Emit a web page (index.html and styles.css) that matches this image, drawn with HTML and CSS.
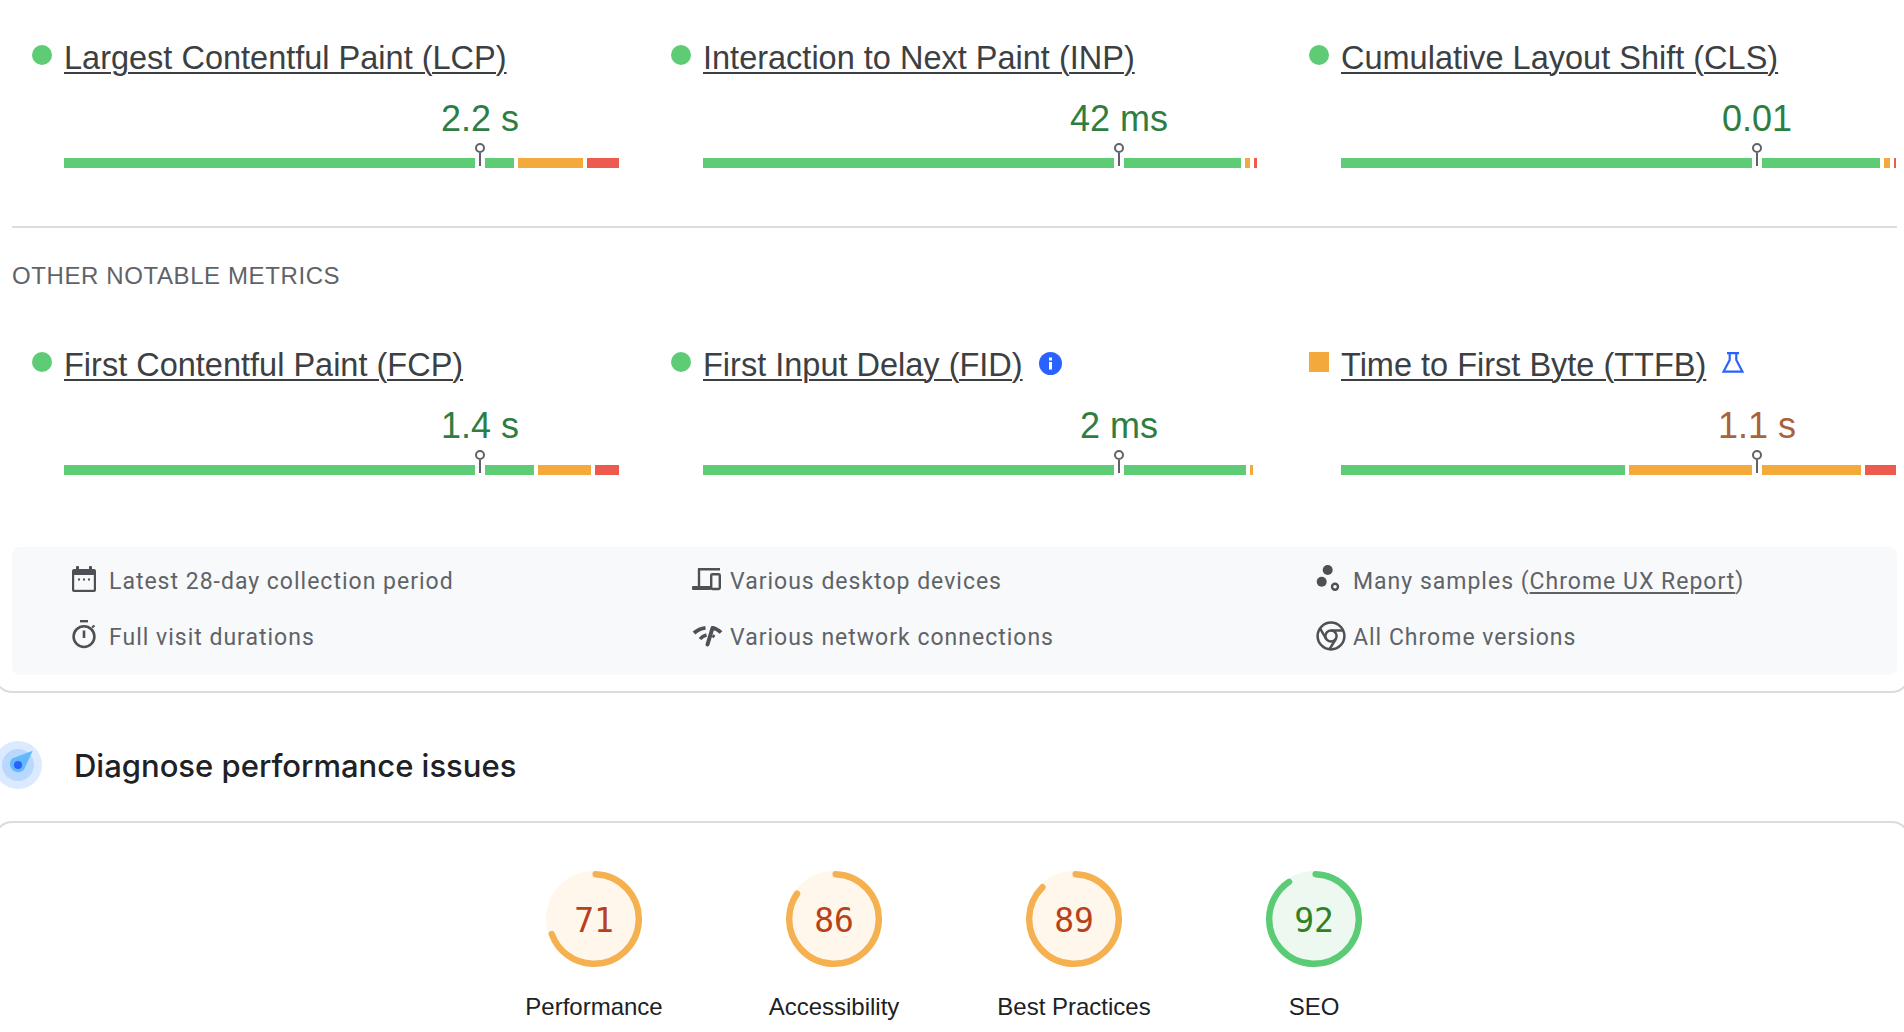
FILE: index.html
```html
<!DOCTYPE html>
<html lang="en">
<head>
  <meta charset="UTF-8">
  <title>PageSpeed Insights</title>
  <link rel="stylesheet" href="styles.css">
</head>
<body>
  <section class="card card-top">
    <div class="metrics">
      <div class="metric">
        <div class="metric-head"><span class="rating dot"></span><a class="metric-title" href="#">Largest Contentful Paint (LCP)</a></div>
        <div class="value good">2.2 s</div>
        <div class="bar">
          <span class="seg green" style="width:450px"></span><span class="seg orange" style="width:65px"></span><span class="seg red" style="width:32px"></span>
          <span class="marker"></span>
        </div>
      </div>
      <div class="metric">
        <div class="metric-head"><span class="rating dot"></span><a class="metric-title" href="#">Interaction to Next Paint (INP)</a></div>
        <div class="value good">42 ms</div>
        <div class="bar">
          <span class="seg green" style="width:538px"></span><span class="seg orange" style="width:5px"></span><span class="seg red" style="width:3px"></span>
          <span class="marker"></span>
        </div>
      </div>
      <div class="metric">
        <div class="metric-head"><span class="rating dot"></span><a class="metric-title" href="#">Cumulative Layout Shift (CLS)</a></div>
        <div class="value good">0.01</div>
        <div class="bar">
          <span class="seg green" style="width:539px"></span><span class="seg orange" style="width:6px"></span><span class="seg red" style="width:2px"></span>
          <span class="marker"></span>
        </div>
      </div>
    </div>

    <hr class="divider">
    <h3 class="other-title">OTHER NOTABLE METRICS</h3>

    <div class="metrics">
      <div class="metric">
        <div class="metric-head"><span class="rating dot"></span><a class="metric-title" href="#">First Contentful Paint (FCP)</a></div>
        <div class="value good">1.4 s</div>
        <div class="bar">
          <span class="seg green" style="width:470px"></span><span class="seg orange" style="width:53px"></span><span class="seg red" style="width:24px"></span>
          <span class="marker"></span>
        </div>
      </div>
      <div class="metric">
        <div class="metric-head">
          <span class="rating dot"></span><a class="metric-title" href="#">First Input Delay (FID)</a>
          <svg class="head-icon info-badge" width="23" height="23" viewBox="0 0 23 23"><circle cx="11.5" cy="11.5" r="11.5" fill="#2962ff"/><rect x="10" y="10" width="3" height="7.5" fill="#fff"/><rect x="10" y="5.5" width="3" height="3" fill="#fff"/></svg>
        </div>
        <div class="value good">2 ms</div>
        <div class="bar">
          <span class="seg green" style="width:543px"></span><span class="seg orange" style="width:3px"></span>
          <span class="marker"></span>
        </div>
      </div>
      <div class="metric">
        <div class="metric-head">
          <span class="rating square"></span><a class="metric-title" href="#">Time to First Byte (TTFB)</a>
          <svg class="head-icon" width="22" height="21" viewBox="0 0 22 21"><path d="M5 1.2H17M7.7 1.2V8L1.6 19.6H20.4L14.3 8V1.2" fill="none" stroke="#2962ff" stroke-width="2.2"/></svg>
        </div>
        <div class="value average">1.1 s</div>
        <div class="bar">
          <span class="seg green" style="width:284px"></span><span class="seg orange" style="width:232px"></span><span class="seg red" style="width:31px"></span>
          <span class="marker"></span>
        </div>
      </div>
    </div>

    <div class="info">
      <div class="info-item">
        <svg class="info-icon" viewBox="0 0 26 30"><rect y="3" width="24" height="23" rx="2" fill="#4d5054"/><rect x="2.2" y="9" width="19.6" height="14.8" fill="#f8f9fa"/><rect x="4" width="3" height="5" rx="1" fill="#4d5054"/><rect x="17" width="3" height="5" rx="1" fill="#4d5054"/><rect x="6" y="12.5" width="2" height="2" fill="#4d5054"/><rect x="11" y="12.5" width="2" height="2" fill="#4d5054"/><rect x="16" y="12.5" width="2" height="2" fill="#4d5054"/></svg>
        <span>Latest 28-day collection period</span>
      </div>
      <div class="info-item">
        <svg class="info-icon" viewBox="0 0 26 30"><path d="M5 3.2H27M6 3V20" fill="none" stroke="#4d5054" stroke-width="2.4"/><rect x="-1" y="20" width="19" height="4" rx="1" fill="#4d5054"/><rect x="18.2" y="8.2" width="8.6" height="14.8" rx="1.2" fill="#f8f9fa" stroke="#4d5054" stroke-width="2.4"/></svg>
        <span>Various desktop devices</span>
      </div>
      <div class="info-item">
        <svg class="info-icon" viewBox="0 0 26 30"><circle cx="11.7" cy="4" r="5" fill="#4d5054"/><circle cx="5.7" cy="15.7" r="5" fill="#4d5054"/><circle cx="19" cy="20.7" r="3" fill="none" stroke="#4d5054" stroke-width="2.4"/></svg>
        <span>Many samples (<a class="info-link" href="#">Chrome UX Report</a>)</span>
      </div>
      <div class="info-item">
        <svg class="info-icon" viewBox="0 0 26 30"><rect x="8" y="-2" width="8" height="2.4" fill="#4d5054"/><circle cx="12" cy="14.6" r="10.4" fill="none" stroke="#4d5054" stroke-width="2.6"/><rect x="10.7" y="8.5" width="2.6" height="7.5" fill="#4d5054"/><path d="M20 5.5L22.5 3.5" stroke="#4d5054" stroke-width="2.2"/></svg>
        <span>Full visit durations</span>
      </div>
      <div class="info-item">
        <svg class="info-icon" viewBox="0 0 26 30"><path d="M1 11Q6 6.5 12.5 5.8" fill="none" stroke="#4d5054" stroke-width="3.8"/><path d="M19 5.8Q24 6.5 28 10.5" fill="none" stroke="#4d5054" stroke-width="3.8"/><path d="M7 17Q9.5 14 13.5 13" fill="none" stroke="#4d5054" stroke-width="3.4"/><path d="M19.5 13.5L21.5 15" fill="none" stroke="#4d5054" stroke-width="3"/><path d="M19.5 6L14.5 22.5" fill="none" stroke="#4d5054" stroke-width="4" stroke-linecap="round"/></svg>
        <span>Various network connections</span>
      </div>
      <div class="info-item">
        <svg class="info-icon" viewBox="0 0 26 30"><g fill="none" stroke="#4d5054" stroke-width="2.5"><circle cx="15" cy="14" r="13.4"/><circle cx="15" cy="14" r="5.6"/><path d="M15 8.4H27M10.2 17L4.2 6.6M19.8 17L13.6 27.2"/></g></svg>
        <span>All Chrome versions</span>
      </div>
    </div>
  </section>

  <div class="section-head">
    <svg width="48" height="48" viewBox="0 0 48 48"><circle cx="24" cy="24" r="24" fill="#dbeafe"/><circle cx="24" cy="24" r="16" fill="#b9d8fd"/><path d="M38.7 9.7L30 28.5A8 8 0 1 1 18 17.5Z" fill="#63b8fb"/><circle cx="24" cy="24" r="4" fill="#2962ff"/></svg>
    <h2 class="section-title">Diagnose performance issues</h2>
  </div>

  <section class="card card-bottom">
    <div class="gauges">
      <a class="gauge" href="#">
        <span class="gauge-ring">
          <svg width="96" height="96" viewBox="0 0 96 96"><circle class="ring-bg avg" cx="48" cy="48" r="48"/><circle class="ring-arc avg" cx="48" cy="48" r="44.8" pathLength="100" stroke-dasharray="69 100"/></svg>
          <span class="gauge-num avg">71</span>
        </span>
        <span class="gauge-label">Performance</span>
      </a>
      <a class="gauge" href="#">
        <span class="gauge-ring">
          <svg width="96" height="96" viewBox="0 0 96 96"><circle class="ring-bg avg" cx="48" cy="48" r="48"/><circle class="ring-arc avg" cx="48" cy="48" r="44.8" pathLength="100" stroke-dasharray="84 100"/></svg>
          <span class="gauge-num avg">86</span>
        </span>
        <span class="gauge-label">Accessibility</span>
      </a>
      <a class="gauge" href="#">
        <span class="gauge-ring">
          <svg width="96" height="96" viewBox="0 0 96 96"><circle class="ring-bg avg" cx="48" cy="48" r="48"/><circle class="ring-arc avg" cx="48" cy="48" r="44.8" pathLength="100" stroke-dasharray="87 100"/></svg>
          <span class="gauge-num avg">89</span>
        </span>
        <span class="gauge-label">Best Practices</span>
      </a>
      <a class="gauge" href="#">
        <span class="gauge-ring">
          <svg width="96" height="96" viewBox="0 0 96 96"><circle class="ring-bg pass" cx="48" cy="48" r="48"/><circle class="ring-arc pass" cx="48" cy="48" r="44.8" pathLength="100" stroke-dasharray="90 100"/></svg>
          <span class="gauge-num pass">92</span>
        </span>
        <span class="gauge-label">SEO</span>
      </a>
    </div>
  </section>
</body>
</html>
```

FILE: styles.css
```css
html, body {
  margin: 0;
  height: 100%;
  overflow: hidden;
  background: #fff;
}
body {
  font-family: "Liberation Sans", Arial, sans-serif;
  color: #202124;
}
a {
  color: inherit;
}

.card {
  margin: 0 -6px;
  border: 2px solid #dadce0;
}
.card-top {
  border-top: 0;
  border-radius: 0 0 18px 18px;
  padding: 38px 11px 16px 16px;
}
.card-bottom {
  border-bottom: 0;
  border-radius: 18px 18px 0 0;
  height: 160px;
  padding-top: 48px;
}

.metrics {
  display: grid;
  grid-template-columns: 639px 638px 1fr;
}
.metric {
  padding-left: 20px;
}
.metric-head {
  display: flex;
  align-items: center;
  height: 34px;
}
.rating {
  flex: none;
  width: 20px;
  height: 20px;
  margin-right: 12px;
  background: #5ecc75;
}
.dot {
  border-radius: 50%;
}
.square {
  background: #f4a93b;
}
.metric-title {
  padding-top: 6px;
  font-size: 32.5px;
  color: #3c4043;
  text-decoration-thickness: 2px;
  text-underline-offset: 3px;
}
.head-icon {
  flex: none;
  margin-left: 16px;
}
.info-badge {
  margin-top: 2px;
}

.value {
  display: flex;
  justify-content: center;
  width: 0;
  margin: 27px 0 19px 448px;
  font-size: 36px;
  line-height: 40px;
  white-space: nowrap;
}
.good {
  color: #2e7d42;
}
.average {
  color: #a9623a;
}

.bar {
  position: relative;
  display: flex;
  gap: 4px;
  width: 555px;
  height: 10px;
  margin-left: 32px;
}
.seg {
  display: block;
  height: 10px;
}
.green {
  background: #5ecc75;
}
.orange {
  background: #f4a93b;
}
.red {
  background: #ec5b4e;
}
/* white halo cuts the bar around the pin */
.marker {
  position: absolute;
  left: 411px;
  top: 0;
  width: 10px;
  height: 10px;
  background: #fff;
}
.marker::before {
  content: "";
  position: absolute;
  left: 0;
  top: -15px;
  box-sizing: border-box;
  width: 10px;
  height: 10px;
  border: 2px solid #5f6368;
  border-radius: 50%;
  background: #fff;
}
.marker::after {
  content: "";
  position: absolute;
  left: 4px;
  top: -5px;
  width: 2px;
  height: 13px;
  background: #5f6368;
}

.divider {
  height: 2px;
  margin: 58px 0 0;
  border: 0;
  background: #dadce0;
}
.other-title {
  margin: 34px 0 0;
  font-size: 24px;
  font-weight: 400;
  line-height: 28px;
  letter-spacing: .6px;
  color: #5f6368;
}
.card-top .other-title + .metrics {
  margin-top: 55px;
}

.info {
  display: grid;
  grid-template-columns: 621px 623px 1fr;
  row-gap: 28px;
  margin-top: 72px;
  padding: 20px 0 24px 60px;
  border-radius: 8px;
  background: #f8f9fa;
  font-family: Roboto, "Liberation Sans", sans-serif;
  font-size: 23px;
  line-height: 30px;
  letter-spacing: 1px;
  color: #5f6368;
}
.info-item {
  display: flex;
  gap: 11px;
  height: 28px;
}
.info-icon {
  flex: none;
  width: 26px;
  height: 30px;
  overflow: visible;
  margin-top: -1px;
}
.info-link {
  text-decoration-thickness: 2px;
  text-underline-offset: 3px;
}

.section-head {
  display: flex;
  align-items: center;
  gap: 32px;
  padding: 48px 0 32px;
  margin-left: -6px;
}
.section-head svg {
  flex: none;
}
.section-title {
  margin: 0;
  font-family: Inter, sans-serif;
  font-size: 31px;
  font-weight: 500;
  color: #202124;
}

.gauges {
  display: flex;
  justify-content: center;
  padding-left: 4px;
}
.gauge {
  display: flex;
  flex-direction: column;
  align-items: center;
  width: 240px;
  text-decoration: none;
}
.gauge-ring {
  display: block;
  position: relative;
  width: 96px;
  height: 96px;
}
.ring-bg {
  fill: #fff6ec;
}
.ring-bg.pass {
  fill: #edf8f0;
}
.ring-arc {
  fill: none;
  stroke-width: 6.4px;
  stroke-linecap: round;
  transform: rotate(-87.9deg);
  transform-origin: 48px 48px;
}
.ring-arc.avg {
  stroke: #f5b04f;
}
.ring-arc.pass {
  stroke: #5ccb76;
}
.gauge-num {
  position: absolute;
  inset: 2px 0 0;
  display: flex;
  align-items: center;
  justify-content: center;
  font-family: "DejaVu Sans Mono", monospace;
  font-size: 33px;
}
.gauge-num.avg {
  color: #b8401a;
}
.gauge-num.pass {
  color: #33801f;
}
.gauge-label {
  margin-top: 26px;
  font-size: 24px;
  line-height: 28px;
  color: #202124;
}
```
